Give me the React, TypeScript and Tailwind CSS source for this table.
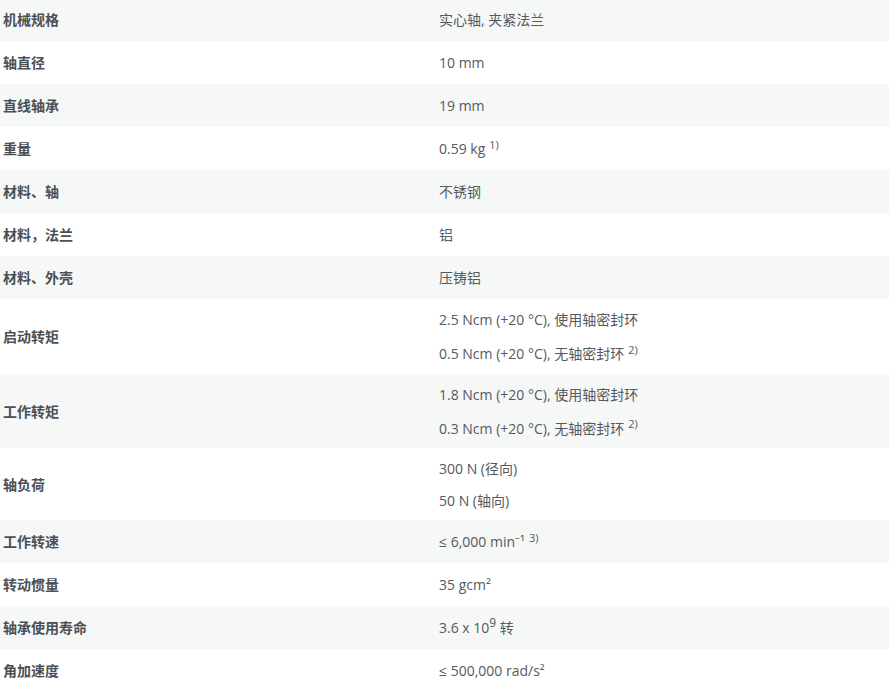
type Row = { label: string; values: React.ReactNode[]; h: string; gap?: string };

const Sup = ({ children }: { children: React.ReactNode }) => (
	<sup className="ml-[4px] text-[11px]">{children}</sup>
);

const rows: Row[] = [
	{ label: "机械规格", values: ["实心轴, 夹紧法兰"], h: "h-[43px]" },
	{ label: "轴直径", values: ["10 mm"], h: "h-[43px]" },
	{ label: "直线轴承", values: ["19 mm"], h: "h-[43px]" },
	{
		label: "重量",
		values: [
			<>
				0.59 kg<Sup>1)</Sup>
			</>,
		],
		h: "h-[43px]",
	},
	{ label: "材料、轴", values: ["不锈钢"], h: "h-[43px]" },
	{ label: "材料，法兰", values: ["铝"], h: "h-[43px]" },
	{ label: "材料、外壳", values: ["压铸铝"], h: "h-[43px]" },
	{
		label: "启动转矩",
		values: [
			"2.5 Ncm (+20 °C), 使用轴密封环",
			<>
				0.5 Ncm (+20 °C), 无轴密封环<Sup>2)</Sup>
			</>,
		],
		h: "h-[75px]",
		gap: "gap-[15px]",
	},
	{
		label: "工作转矩",
		values: [
			"1.8 Ncm (+20 °C), 使用轴密封环",
			<>
				0.3 Ncm (+20 °C), 无轴密封环<Sup>2)</Sup>
			</>,
		],
		h: "h-[74px]",
		gap: "gap-[15px]",
	},
	{ label: "轴负荷", values: ["300 N (径向)", "50 N (轴向)"], h: "h-[72px]" },
	{
		label: "工作转速",
		values: [
			<>
				≤ 6,000 min⁻¹<Sup>3)</Sup>
			</>,
		],
		h: "h-[43px]",
	},
	{ label: "转动惯量", values: ["35 gcm²"], h: "h-[43px]" },
	{
		label: "轴承使用寿命",
		values: [
			<>
				3.6 x 10<sup className="text-[12px]">9</sup> 转
			</>,
		],
		h: "h-[43px]",
	},
	{ label: "角加速度", values: ["≤ 500,000 rad/s²"], h: "h-[43px]" },
];

export default function App() {
	return (
		<div
			className="w-[889px] h-[687px] overflow-hidden bg-white text-[14px]"
			style={{ fontFamily: '"Open Sans", "Noto Sans CJK SC", sans-serif' }}
		>
			<div className="-mt-[2px]">
				{rows.map((r, i) => (
					<div
						key={r.label}
						className={`grid grid-cols-[439px_1fr] items-center ${r.h} ${
							i % 2 === 0 ? "bg-[#f6f7f7]" : "bg-white"
						}`}
					>
						<div className="pl-[3px] font-semibold text-[#4b5055]">{r.label}</div>
						<div
							className={`flex flex-col ${r.gap ?? "gap-[13px]"} text-[#555a5e] leading-[19px]`}
						>
							{r.values.map((v, j) => (
								<div key={j}>{v}</div>
							))}
						</div>
					</div>
				))}
			</div>
		</div>
	);
}
